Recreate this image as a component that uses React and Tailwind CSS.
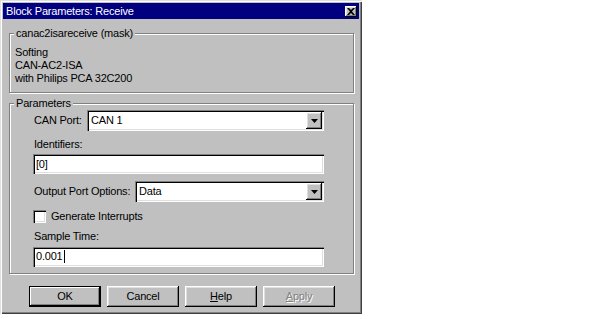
import { useState } from 'react'

const font = { fontFamily: '"Liberation Sans", Arial, sans-serif' }

const sunken =
  'bg-white shadow-[inset_1px_1px_0_#808080,inset_2px_2px_0_#000,inset_-1px_-1px_0_#fff,inset_-2px_-2px_0_#dfdfdf]'
const raised =
  'bg-[#c0c0c0] shadow-[inset_-1px_-1px_0_#000,inset_1px_1px_0_#fff,inset_-2px_-2px_0_#808080,inset_2px_2px_0_#dfdfdf]'

const Group = ({ title, className, children }) => (
  <div className={`relative ml-[6px] w-[345px] border border-[#808080] shadow-[inset_1px_1px_0_#fff,1px_1px_0_#fff] ${className}`}>
    <span className="absolute -top-[8px] left-[4px] bg-[#c0c0c0] px-[2px] leading-[14px]">{title}</span>
    {children}
  </div>
)

const DropArrow = () => (
  <div className={`${raised} flex h-[17px] w-[16px] items-center justify-center`}>
    <svg width="7" height="4" viewBox="0 0 7 4">
      <path d="M0 0h7L3.5 4z" fill="#000" />
    </svg>
  </div>
)

const Select = ({ value, className }) => (
  <div className={`${sunken} flex h-[21px] items-center justify-between pl-[4px] pr-[2px] ${className}`}>
    <span>{value}</span>
    <DropArrow />
  </div>
)

const Button = ({ children, primary, disabled }) => (
  <div
    className={`flex h-[21px] w-[72px] items-center justify-center ${
      primary
        ? 'bg-[#c0c0c0] shadow-[inset_0_0_0_1px_#000,inset_-2px_-2px_0_#000,inset_2px_2px_0_#fff,inset_-3px_-3px_0_#808080]'
        : raised
    } ${disabled ? 'text-[#808080] [text-shadow:1px_1px_0_#fff]' : 'text-black'}`}
  >
    {children}
  </div>
)

export default function App() {
  const [checked, setChecked] = useState(false)

  return (
    <div className="h-[319px] w-[600px] bg-white text-[11px] tracking-[-0.2px] text-black" style={font}>
      <div className="flex h-[314px] w-[362px] flex-col bg-[#c0c0c0] p-[3px] shadow-[inset_1px_1px_0_#dfdfdf,inset_2px_2px_0_#fff,inset_-1px_-1px_0_#404040,inset_-2px_-2px_0_#808080]">
        <div className="flex h-[16px] items-center justify-between bg-[#000080] pl-[3px] pr-[2px] text-white">
          <span>Block Parameters: Receive</span>
          <div className={`${raised} flex h-[11px] w-[12px] items-center justify-center`}>
            <svg width="8" height="7" viewBox="0 0 8 7">
              <path d="M0 0h2l2 2 2-2h2L5 3.5 8 7H6L4 5 2 7H0l3-3.5z" fill="#000" />
            </svg>
          </div>
        </div>

        <Group title="canac2isareceive (mask)" className="mt-[14px] h-[60px]">
          <div className="pl-[5px] pt-[12px] leading-[13px]">
            <div>Softing</div>
            <div>CAN-AC2-ISA</div>
            <div>with Philips PCA 32C200</div>
          </div>
        </Group>

        <Group title="Parameters" className="mt-[10px] h-[171px]">
          <div className="flex flex-col pl-[23px] pt-[6px]">
            <div className="flex items-center">
              <span className="w-[54px] pl-[1px]">CAN Port:</span>
              <Select value="CAN 1" className="w-[237px]" />
            </div>
            <div className="mt-[6px] pl-[1px] leading-[14px]">Identifiers:</div>
            <div className={`${sunken} mt-[3px] flex h-[20px] w-[291px] items-center pl-[3px]`}>[0]</div>
            <div className="mt-[7px] flex items-center">
              <span className="w-[102px] pl-[1px]">Output Port Options:</span>
              <Select value="Data" className="w-[189px]" />
            </div>
            <label className="mt-[6px] flex items-center" onClick={() => setChecked(!checked)}>
              <span className={`${sunken} flex h-[13px] w-[13px] items-center justify-center`}>
                {checked && (
                  <svg width="7" height="7" viewBox="0 0 7 7">
                    <path d="M0 2l2 2 5-4v2L2 6 0 4z" fill="#000" />
                  </svg>
                )}
              </span>
              <span className="ml-[5px]">Generate Interrupts</span>
            </label>
            <div className="mt-[4px] pl-[1px] leading-[14px]">Sample Time:</div>
            <div className={`${sunken} mt-[4px] flex h-[20px] w-[291px] items-center pl-[3px]`}>
              0.001<span className="ml-[1px] h-[13px] w-[1px] bg-black" />
            </div>
          </div>
        </Group>

        <div className="mt-[12px] flex gap-[6px] pl-[26px]">
          <Button primary>OK</Button>
          <Button>Cancel</Button>
          <Button>
            <span><span className="underline">H</span>elp</span>
          </Button>
          <Button disabled>
            <span><span className="underline">A</span>pply</span>
          </Button>
        </div>
      </div>
    </div>
  )
}
